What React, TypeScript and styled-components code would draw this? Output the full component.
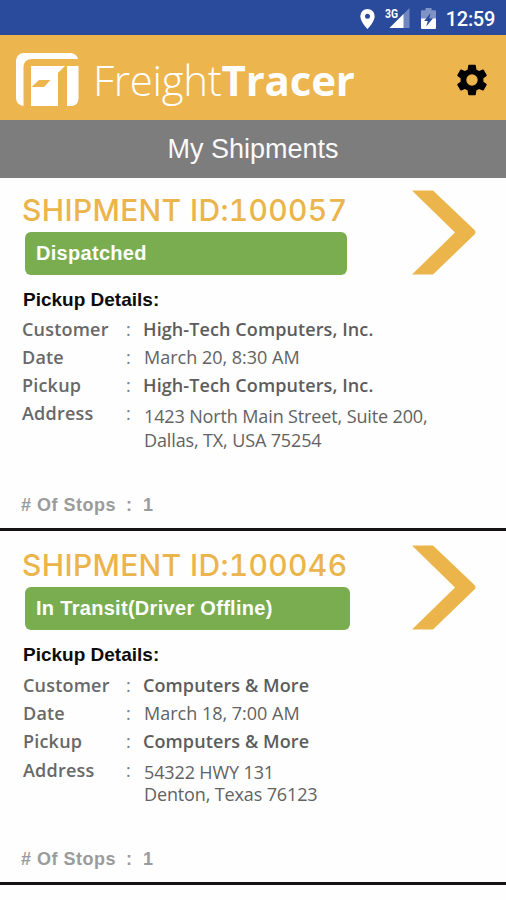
import React from "react";
import styled, { createGlobalStyle } from "styled-components";

const GlobalStyle = createGlobalStyle`
  * { box-sizing: border-box; }
  body { margin: 0; background: #fff; }
`;

const gold = "#ebb54b";

const Screen = styled.div`
  width: 506px;
  height: 900px;
  overflow: hidden;
  display: flex;
  flex-direction: column;
  background: #fefefe;
  font-family: "Open Sans", sans-serif;
`;

const StatusBar = styled.div`
  flex: none;
  height: 35px;
  padding: 2px 11px 0 0;
  display: flex;
  justify-content: flex-end;
  align-items: center;
  background: #2a4a9c;
  color: #fff;
`;

const StatusIcon = styled.svg<{ $gap: number }>`
  flex: none;
  margin-right: ${(p) => p.$gap}px;
`;

const Clock = styled.span`
  font: 500 20px/24px Roboto, sans-serif;
  letter-spacing: -0.3px;
`;

const Header = styled.header`
  flex: none;
  height: 85px;
  padding: 4px 15px 0 16px;
  display: flex;
  align-items: center;
  background: #ecb54e;
`;

const Brand = styled.h1`
  margin: 1px auto 0 14px;
  color: #fff;
  font: 300 42px/56px "Open Sans", sans-serif;
  letter-spacing: -0.3px;
  white-space: nowrap;

  b {
    font-weight: 700;
    letter-spacing: -0.2px;
  }
`;

const TitleBar = styled.h2`
  flex: none;
  height: 58px;
  margin: 0;
  background: #7d7d7d;
  color: #fafafa;
  text-align: center;
  font: 400 27px/58px "Liberation Sans", sans-serif;
`;

const Card = styled.article<{ $height: number; $top: number }>`
  flex: none;
  display: flex;
  flex-direction: column;
  height: ${(p) => p.$height}px;
  padding: ${(p) => p.$top}px 30px 10.500px 22px;
  border-bottom: 3px solid #151313;
`;

const CardTop = styled.div`
  flex: none;
  display: flex;
  justify-content: space-between;
  height: 85px;
`;

const ShipmentId = styled.h3`
  margin: 0;
  color: ${gold};
  font: 500 30px/40px Inter, sans-serif;
  letter-spacing: 0.33px;
  font-variant-numeric: tabular-nums;
  white-space: nowrap;
`;

const Status = styled.div<{ $width: number }>`
  width: ${(p) => p.$width}px;
  height: 43px;
  margin: 2px 0 0 3px;
  padding-left: 11px;
  border-radius: 6px;
  background: #7aad50;
  color: #fff;
  font: 700 20px/43px "Liberation Sans", sans-serif;
  letter-spacing: 0.3px;
`;

const SectionTitle = styled.h4`
  flex: none;
  margin: 13px 0 0 1px;
  height: 24px;
  color: #0c0c0c;
  font: 700 19px/24px "Liberation Sans", sans-serif;
`;

const Details = styled.dl<{ $top: number; $inset: number }>`
  margin: ${(p) => p.$top}px 0 0;
  padding-left: ${(p) => p.$inset}px;
  color: #686868;
  font-size: 18px;
`;

const DetailRow = styled.div<{ $inset: number }>`
  display: grid;
  grid-template-columns: ${(p) => 104 - p.$inset}px 17px 1fr;
  height: 28.2px;
  line-height: 28px;
`;

const Label = styled.dt`
  font-weight: 600;
  letter-spacing: 0.2px;
`;

const Colon = styled.span`
  color: #7c7c7c;
`;

const Value = styled.dd<{ $strong?: boolean; $leading?: number }>`
  margin: 0;
  padding: ${(p) => (p.$leading ? 2.5 + (28 - p.$leading) / 2 : 0)}px 0 0
    ${(p) => (p.$strong ? 0 : 1)}px;
  color: ${(p) => (p.$strong ? "#5c5c5c" : "#626262")};
  font-weight: ${(p) => (p.$strong ? 600 : 400)};
  letter-spacing: ${(p) => (p.$strong ? 0.1 : p.$leading ? -0.13 : 0)}px;
  line-height: ${(p) => p.$leading ?? 28}px;
  white-space: pre-line;
`;

const Stops = styled.div`
  display: grid;
  grid-template-columns: 105px 17px 1fr;
  margin: auto 0 0 -1px;
  color: #9b9b9b;
  font: 700 18px/26px "Liberation Sans", sans-serif;
  letter-spacing: 0.5px;
`;

interface Shipment {
  id: string;
  status: string;
  statusWidth: number;
  customer: string;
  date: string;
  address: string;
  leading: number;
  height: number;
  top: number;
  detailsTop: number;
  inset: number;
}

const shipments: Shipment[] = [
  {
    id: "100057",
    status: "Dispatched",
    statusWidth: 322,
    customer: "High-Tech Computers, Inc.",
    date: "March 20, 8:30 AM",
    address: "1423 North Main Street, Suite 200,\nDallas, TX, USA 75254",
    leading: 24,
    height: 353,
    top: 12,
    detailsTop: 2.6,
    inset: 0,
  },
  {
    id: "100046",
    status: "In Transit(Driver Offline)",
    statusWidth: 325,
    customer: "Computers & More",
    date: "March 18, 7:00 AM",
    address: "54322 HWY 131\nDenton, Texas 76123",
    leading: 22,
    height: 354,
    top: 13.5,
    detailsTop: 4.5,
    inset: 1,
  },
];

const PinIcon = () => (
  <StatusIcon $gap={9} width="15" height="20" viewBox="0 0 15 20">
    <path
      fillRule="evenodd"
      fill="#fff"
      d="M7.5 0A7.2 7.2 0 0 0 .3 7.2C.3 12.5 7.5 20 7.5 20s7.2-7.5 7.2-12.8A7.2 7.2 0 0 0 7.5 0Zm0 4.8a2.5 2.5 0 1 1 0 5 2.5 2.5 0 0 1 0-5Z"
    />
  </StatusIcon>
);

const SignalIcon = () => (
  <StatusIcon $gap={11} width="26" height="21" viewBox="0 0 26 21">
    <path d="M25.500 0v20H5.500Z" fill="#7088bf" />
    <path d="M19.500 6v14H5.500Z" fill="#fff" />
    <text x="1" y="10" fill="#fff" fontFamily="Roboto, sans-serif" fontWeight="700" fontSize="12" textLength="13" lengthAdjust="spacingAndGlyphs">
      3G
    </text>
  </StatusIcon>
);

const BatteryIcon = () => (
  <StatusIcon $gap={10} width="15" height="21" viewBox="0 0 15 21">
    <path d="M4.500 0h6v2.200H14a1 1 0 0 1 1 1V11H0V3.200a1 1 0 0 1 1-1h3.500Z" fill="#8093c5" />
    <path d="M0 10.500h15V20a1 1 0 0 1-1 1H1a1 1 0 0 1-1-1Z" fill="#fff" />
    <path d="M9.600 5 3.200 13h3.600l-1.600 5.500 6.800-8.300H8.300Z" fill="#2a4a9c" />
  </StatusIcon>
);

const Logo = () => (
  <svg width="63" height="54" viewBox="0 0 63 54">
    <g fill="#fff">
      <path d="M7 0H55Q61 1 62 6H16Q8 6 7.500 14V53Q1 52 0 46V7Q1 1 7 0Z" />
      <path d="M15 13H49L42 20V53H15Z" />
      <path d="M51 13H62.500V46Q62 52 56 53H51Z" />
    </g>
    <path d="M15.500 34 23 27H34.500L28 34Z" fill="#ecb54e" />
    <path d="M42 20 50 13H51V53H42Z" fill="#ecb54e" />
  </svg>
);

const GearIcon = () => (
  <svg width="38" height="38" viewBox="0 0 24 24">
    <path d="M19.140 12.940c.04-.3.060-.61.060-.94 0-.32-.02-.64-.07-.94l2.030-1.580c.18-.14.23-.41.120-.61l-1.920-3.320c-.12-.22-.37-.29-.59-.22l-2.390.96c-.5-.38-1.030-.7-1.620-.94l-.36-2.540c-.04-.24-.24-.41-.48-.41h-3.840c-.24 0-.43.17-.47.41l-.36 2.540c-.59.24-1.130.57-1.620.94l-2.390-.96c-.22-.08-.47 0-.59.22L2.740 8.870c-.12.21-.08.47.12.61l2.030 1.580c-.05.3-.09.63-.09.94s.02.64.07.94l-2.030 1.580c-.18.14-.23.41-.12.61l1.920 3.320c.12.22.37.29.59.22l2.390-.96c.5.38 1.030.7 1.620.94l.36 2.540c.05.24.24.41.48.41h3.840c.24 0 .44-.17.47-.41l.36-2.540c.59-.24 1.130-.56 1.620-.94l2.390.96c.22.08.47 0 .59-.22l1.920-3.320c.12-.22.07-.47-.12-.61l-2.010-1.580ZM12 15.600A3.600 3.600 0 1 1 12 8.400a3.600 3.600 0 0 1 0 7.200Z" />
  </svg>
);

const Arrow = () => (
  <svg width="64" height="85" viewBox="0 0 64 85">
    <path d="M0 .5H21L62.500 40Q64.500 42.300 62.500 44.500L21 84.500H0L43 42.500Z" fill={gold} />
  </svg>
);

const Row = ({ label, inset, children }: { label: string; inset: number; children: React.ReactNode }) => (
  <DetailRow $inset={inset}>
    <Label>{label}</Label>
    <Colon>:</Colon>
    {children}
  </DetailRow>
);

const ShipmentCard = ({ s }: { s: Shipment }) => (
  <Card $height={s.height} $top={s.top}>
    <CardTop>
      <div>
        <ShipmentId>SHIPMENT ID:{s.id}</ShipmentId>
        <Status $width={s.statusWidth}>{s.status}</Status>
      </div>
      <Arrow />
    </CardTop>
    <SectionTitle>Pickup Details:</SectionTitle>
    <Details $top={s.detailsTop} $inset={s.inset}>
      <Row label="Customer" inset={s.inset}>
        <Value $strong>{s.customer}</Value>
      </Row>
      <Row label="Date" inset={s.inset}>
        <Value>{s.date}</Value>
      </Row>
      <Row label="Pickup" inset={s.inset}>
        <Value $strong>{s.customer}</Value>
      </Row>
      <Row label="Address" inset={s.inset}>
        <Value $leading={s.leading}>{s.address}</Value>
      </Row>
    </Details>
    <Stops>
      <span># Of Stops</span>
      <span>:</span>
      <span>1</span>
    </Stops>
  </Card>
);

export default function App() {
  return (
    <Screen>
      <GlobalStyle />
      <StatusBar>
        <PinIcon />
        <SignalIcon />
        <BatteryIcon />
        <Clock>12:59</Clock>
      </StatusBar>
      <Header>
        <Logo />
        <Brand>
          Freight<b>Tracer</b>
        </Brand>
        <GearIcon />
      </Header>
      <TitleBar>My Shipments</TitleBar>
      {shipments.map((s) => (
        <ShipmentCard key={s.id} s={s} />
      ))}
    </Screen>
  );
}
